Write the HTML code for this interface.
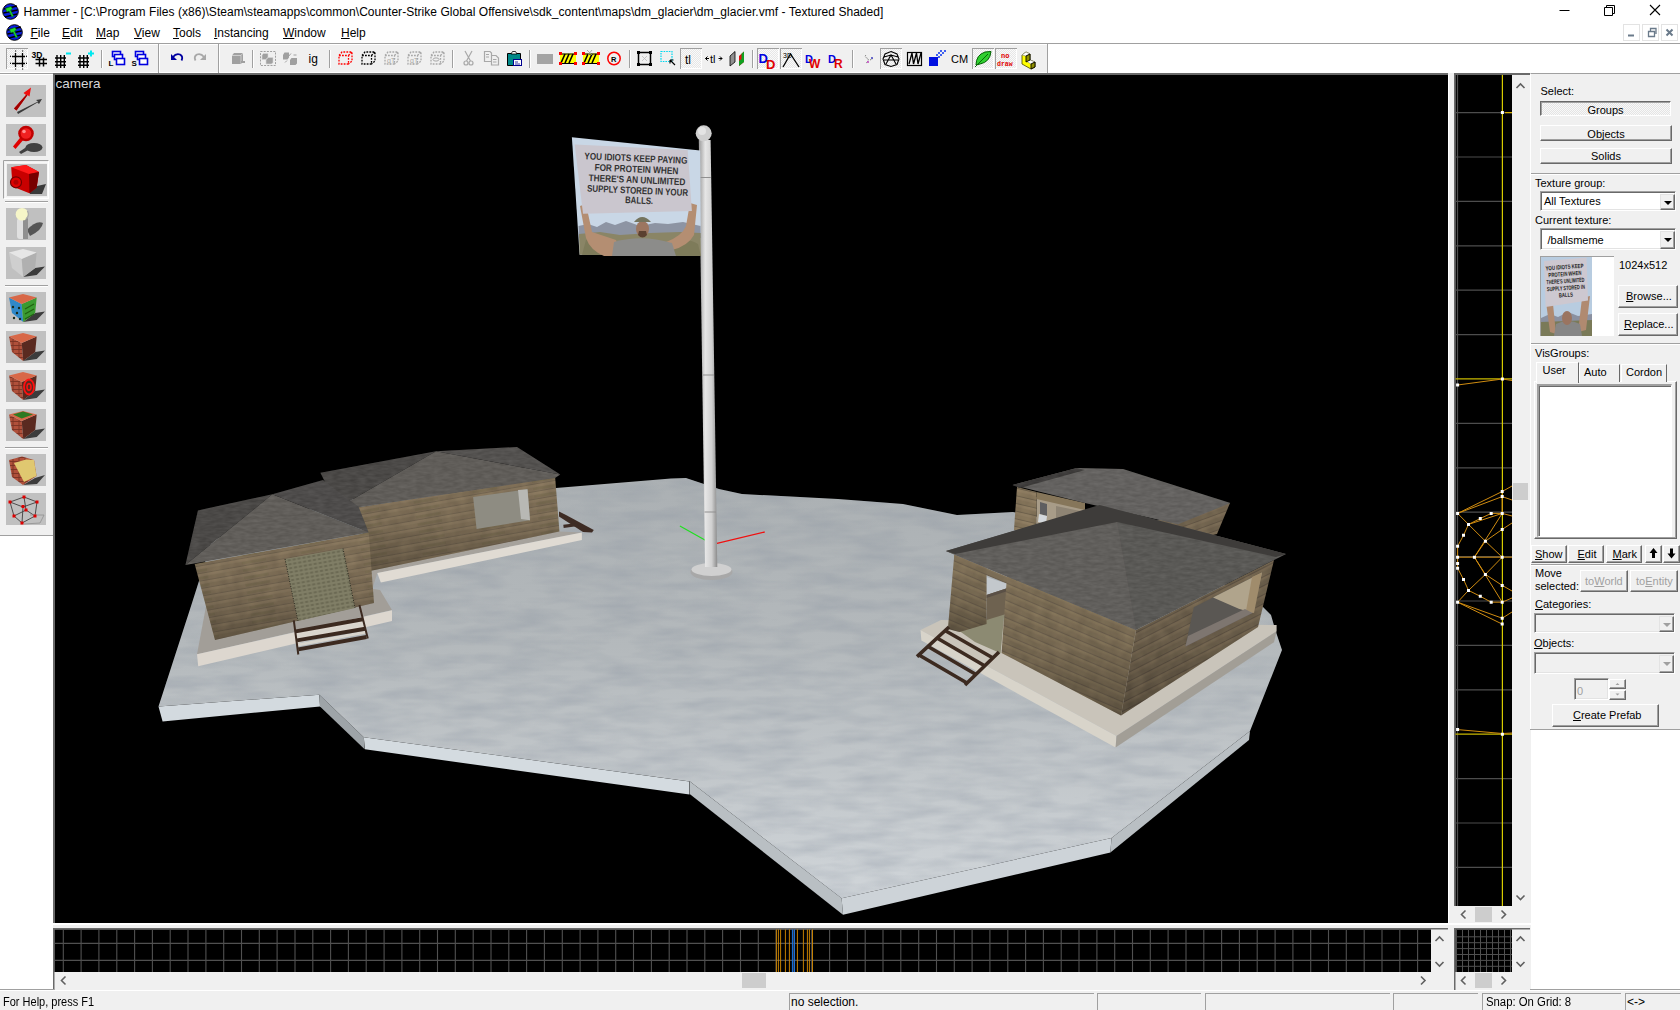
<!DOCTYPE html>
<html><head><meta charset="utf-8">
<style>
*{margin:0;padding:0;box-sizing:border-box}
html,body{width:1680px;height:1010px;overflow:hidden;background:#fff;font-family:"Liberation Sans",sans-serif;color:#000}
.a{position:absolute}
.t{position:absolute;white-space:nowrap;line-height:1}
.mn{top:27px;font-size:12px}
.p{font-size:11px}
.st{font-size:12px}
.btn{background:#f0f0f0;border-top:1px solid #fff;border-left:1px solid #fff;border-right:1px solid #696969;border-bottom:1px solid #696969;box-shadow:inset -1px -1px 0 #a0a0a0}
.btnp{background:repeating-conic-gradient(#f8f8f8 0 25%,#e4e4e4 0 50%) 0 0/2px 2px;border-top:1px solid #696969;border-left:1px solid #696969;border-right:1px solid #fff;border-bottom:1px solid #fff;box-shadow:inset 1px 1px 0 #a0a0a0}
.sep{height:2px;border-top:1px solid #a0a0a0;border-bottom:1px solid #fff}
.combo{background:#fff;border-top:1px solid #a0a0a0;border-left:1px solid #a0a0a0;border-right:1px solid #fff;border-bottom:1px solid #fff;box-shadow:inset 1px 1px 0 #696969,inset -1px -1px 0 #e3e3e3}
.cbtn{position:absolute;width:15px;height:16px;background:#f0f0f0;border-top:1px solid #e3e3e3;border-left:1px solid #e3e3e3;border-right:1px solid #696969;border-bottom:1px solid #696969;box-shadow:inset -1px -1px 0 #a0a0a0}
.cbtn:after{content:"";position:absolute;left:3px;top:6px;border-left:4px solid transparent;border-right:4px solid transparent;border-top:4px solid #000}
.cbtn.dis:after{border-top-color:#a0a0a0}
.tab{background:#f0f0f0;border-top:1px solid #fff;border-left:1px solid #fff;border-right:1px solid #696969}
.sp{top:993px;height:17px;border-top:1px solid #a0a0a0;border-left:1px solid #a0a0a0}
</style></head><body>
<!-- TITLE BAR -->
<svg class="a" style="left:2px;top:3px" width="17" height="17" viewBox="0 0 17 17">
<circle cx="8.5" cy="8.5" r="7.8" fill="#0a1ee0" stroke="#000" stroke-width="1"/>
<path d="M2 6 L15 3 M1.5 10 L15.5 7 M3 14 L15 11" stroke="#000" stroke-width="1.4"/>
<path d="M3.5 5.5 L9 3.5 L10.5 6 L8.5 7 L11.5 13 L10 14 L7 8 L5 9 Z" fill="#22dd22" stroke="#063" stroke-width="0.6"/>
</svg>
<div class="t" style="left:23.5px;top:6.2px;font-size:12px;color:#000;letter-spacing:0.04px">Hammer - [C:\Program Files (x86)\Steam\steamapps\common\Counter-Strike Global Offensive\sdk_content\maps\dm_glacier\dm_glacier.vmf - Textured Shaded]</div>
<svg class="a" style="left:1550px;top:0" width="130" height="22">
<path d="M9.5 10.5 H19.5" stroke="#000" stroke-width="1"/>
<path d="M54.5 7.5 H62.5 V15.5 H54.5 Z M56.5 7.5 V5.5 H64.5 V13.5 H62.5" fill="none" stroke="#000" stroke-width="1"/>
<path d="M100 5 L110 15 M110 5 L100 15" stroke="#000" stroke-width="1.1"/>
</svg>
<!-- MENU BAR -->
<svg class="a" style="left:6px;top:24px" width="17" height="17" viewBox="0 0 17 17">
<circle cx="8.5" cy="8.5" r="7.8" fill="#0a1ee0" stroke="#000" stroke-width="1"/>
<path d="M2 6 L15 3 M1.5 10 L15.5 7 M3 14 L15 11" stroke="#000" stroke-width="1.4"/>
<path d="M3.5 5.5 L9 3.5 L10.5 6 L8.5 7 L11.5 13 L10 14 L7 8 L5 9 Z" fill="#22dd22" stroke="#063" stroke-width="0.6"/>
</svg>
<div class="t mn" style="left:30.5px"><u>F</u>ile</div>
<div class="t mn" style="left:62px"><u>E</u>dit</div>
<div class="t mn" style="left:96px"><u>M</u>ap</div>
<div class="t mn" style="left:134px"><u>V</u>iew</div>
<div class="t mn" style="left:173px"><u>T</u>ools</div>
<div class="t mn" style="left:214px"><u>I</u>nstancing</div>
<div class="t mn" style="left:283px"><u>W</u>indow</div>
<div class="t mn" style="left:341px"><u>H</u>elp</div>
<svg class="a" style="left:1622px;top:23px" width="58" height="19">
<rect x="1.5" y="1.5" width="16" height="16" fill="#fff" stroke="#e3e3e3"/>
<rect x="20.5" y="1.5" width="16" height="16" fill="#fff" stroke="#e3e3e3"/>
<rect x="39.5" y="1.5" width="16" height="16" fill="#fff" stroke="#e3e3e3"/>
<path d="M6 12.5 H12" stroke="#6a7a8a" stroke-width="2"/>
<path d="M26.5 8.5 H32.5 V13.5 H26.5 Z M28.5 8.5 V5.5 H34 V11" fill="none" stroke="#6a7a8a" stroke-width="1.3"/>
<path d="M44.5 6.5 L50.5 12.5 M50.5 6.5 L44.5 12.5" stroke="#6a7a8a" stroke-width="2"/>
</svg>
<!-- TOOLBAR (svg origin y=43) -->
<svg class="a" style="left:0;top:43px" width="1680" height="31" viewBox="0 0 1680 31" shape-rendering="crispEdges">
<defs>
<pattern id="dith" width="2" height="2" patternUnits="userSpaceOnUse"><rect width="2" height="2" fill="#fafafa"/><rect width="1" height="1" fill="#e6e6e6"/><rect x="1" y="1" width="1" height="1" fill="#e6e6e6"/></pattern>
</defs>
<rect x="0" y="0" width="1048" height="31" fill="#f0f0f0"/>
<rect x="0" y="0" width="1680" height="1" fill="#a0a0a0"/>
<rect x="0" y="1" width="1680" height="1" fill="#fff"/>
<rect x="0" y="29" width="1680" height="1" fill="#fff"/>
<rect x="0" y="30" width="1680" height="1" fill="#a0a0a0"/>
<!-- pressed buttons -->
<g fill="url(#dith)" stroke="none">
<rect x="6" y="5" width="22" height="21"/><rect x="680" y="5" width="22" height="21"/><rect x="757" y="5" width="22" height="21"/><rect x="780" y="5" width="22" height="21"/><rect x="880" y="5" width="22" height="21"/><rect x="972" y="5" width="22" height="21"/><rect x="995" y="5" width="22" height="21"/>
</g>
<g fill="none" stroke="#a0a0a0" stroke-width="1">
<path d="M6.5 26 V5.5 H28"/><path d="M680.5 26 V5.5 H702"/><path d="M757.5 26 V5.5 H779"/><path d="M780.5 26 V5.5 H802"/><path d="M880.5 26 V5.5 H902"/><path d="M972.5 26 V5.5 H994"/><path d="M995.5 26 V5.5 H1017"/>
</g>
<g fill="none" stroke="#fff" stroke-width="1">
<path d="M7 25.5 H27.5 V6"/><path d="M681 25.5 H701.5 V6"/><path d="M758 25.5 H778.5 V6"/><path d="M781 25.5 H801.5 V6"/><path d="M881 25.5 H901.5 V6"/><path d="M973 25.5 H993.5 V6"/><path d="M996 25.5 H1016.5 V6"/>
</g>
<!-- separators -->
<g fill="#a0a0a0">
<rect x="101" y="7" width="1" height="18"/><rect x="252" y="7" width="1" height="18"/><rect x="329" y="7" width="1" height="18"/><rect x="452" y="7" width="1" height="18"/><rect x="529" y="7" width="1" height="18"/><rect x="629" y="7" width="1" height="18"/><rect x="752" y="7" width="1" height="18"/><rect x="852" y="7" width="1" height="18"/>
<rect x="158" y="1" width="1" height="29"/><rect x="218" y="1" width="1" height="29"/><rect x="1047" y="1" width="1" height="29"/>
</g>
<g fill="#fff">
<rect x="102" y="7" width="1" height="18"/><rect x="253" y="7" width="1" height="18"/><rect x="330" y="7" width="1" height="18"/><rect x="453" y="7" width="1" height="18"/><rect x="530" y="7" width="1" height="18"/><rect x="630" y="7" width="1" height="18"/><rect x="753" y="7" width="1" height="18"/><rect x="853" y="7" width="1" height="18"/>
<rect x="159" y="1" width="1" height="29"/><rect x="219" y="1" width="1" height="29"/><rect x="1048" y="1" width="1" height="29"/>
</g>
</svg>
<svg class="a" style="left:0;top:43px" width="1680" height="31" viewBox="0 0 1680 31">
<!-- grid icon 1 -->
<g stroke="#000" stroke-width="1.3" fill="none"><path d="M12 13.5 H25 M12 20.5 H25 M15.5 10 V24 M22.5 10 V24"/></g>
<g fill="#000"><rect x="10" y="12.7" width="1" height="1.2"/><rect x="26" y="12.7" width="1" height="1.2"/><rect x="10" y="19.7" width="1" height="1.2"/><rect x="26" y="19.7" width="1" height="1.2"/><rect x="15" y="7.5" width="1.2" height="1"/><rect x="22" y="7.5" width="1.2" height="1"/><rect x="15" y="25.5" width="1.2" height="1"/><rect x="22" y="25.5" width="1.2" height="1"/></g>
<!-- 3D grid -->
<text x="31.5" y="14.5" font-family="Liberation Sans" font-weight="bold" font-size="8.5" fill="#000">3D</text>
<g stroke="#000" stroke-width="1.5" fill="none"><path d="M35.5 16.5 H47 M35.5 20.5 H47 M39.5 14.5 V23.5 M43.5 14.5 V23.5"/></g>
<!-- grid - -->
<g stroke="#000" stroke-width="1.4" fill="none"><path d="M55 15 H66 M55 18.7 H66 M55 22.3 H66 M57 12 V25 M60.7 12 V25 M64.3 12 V25"/><path d="M78 15 H89 M78 18.7 H89 M78 22.3 H89 M80 12 V25 M83.7 12 V25 M87.3 12 V25"/></g>
<path d="M66 10.5 H71" stroke="#00e8f0" stroke-width="2"/>
<path d="M88 10.5 H94 M91 7.5 V13.5" stroke="#00e8f0" stroke-width="2"/>
<!-- L / S stacked -->
<g fill="#fff" stroke="#0000e0" stroke-width="1.6">
<rect x="112.5" y="8.5" width="8" height="5"/><rect x="114.5" y="11.5" width="8" height="5"/><rect x="116.5" y="15.5" width="8" height="6"/>
<rect x="135.5" y="8.5" width="8" height="5"/><rect x="137.5" y="11.5" width="8" height="5"/><rect x="139.5" y="15.5" width="8" height="6"/>
</g>
<text x="108.5" y="23" font-family="Liberation Sans" font-weight="bold" font-size="8" fill="#000">L</text>
<text x="131.5" y="23" font-family="Liberation Sans" font-weight="bold" font-size="8" fill="#000">S</text>
<!-- undo/redo -->
<path d="M173 14 Q176 10 180 11.5 Q183.5 13.5 181.5 17.5" fill="none" stroke="#0000a0" stroke-width="1.8"/>
<path d="M171 11 L171 17 L177 17 Z" fill="#0000a0"/>
<path d="M204 14 Q201 10 197 11.5 Q193.5 13.5 195.5 17.5" fill="none" stroke="#a8a8a8" stroke-width="1.8"/>
<path d="M206 11 L206 17 L200 17 Z" fill="#a8a8a8"/>
<!-- cube -->
<path d="M232 12.5 L234 10 H243 V18.5 L241 21 H232 Z" fill="#a0a0a0"/><path d="M232 12.5 H241 L243 10 M241 12.5 V21" stroke="#d8d8d8" stroke-width="0.8" fill="none"/><rect x="241" y="18" width="4" height="2" fill="#a0a0a0"/>
<!-- group -->
<rect x="260.5" y="8.5" width="15" height="14" fill="none" stroke="#a0a0a0" stroke-dasharray="2,1.2"/>
<path d="M262 12 L263.5 10.5 H268 V15 L266.5 16.5 H262 Z M266 16 L267.5 14.5 H273 V19.5 L271.5 21 H266 Z" fill="#a0a0a0" stroke="#d8d8d8" stroke-width="0.6"/>
<path d="M283 12 L284.5 9.5 H289 V14.5 L287.5 16.5 H283 Z M290 17 L291.5 15 H297 V20.5 L295.5 22 H290 Z" fill="#a0a0a0"/>
<path d="M291 10.5 L288 14 M296.5 12 H293.5 M285 19.5 L287 17.5" stroke="#a0a0a0" stroke-width="1"/>
<text x="308.5" y="20" font-family="Liberation Sans" font-size="12" fill="#000">ig</text>
<!-- dashed cubes -->
<g fill="none" stroke-width="1.3" stroke-dasharray="1.8,1.2">
<path d="M339 12.5 H348.5 V21 H339 Z M339 12.5 L342 9 H352 V18 L348.5 21 M348.5 12.5 L352 9" stroke="#ff0000"/>
<path d="M362 12.5 H371.5 V21 H362 Z M362 12.5 L365 9 H375 V18 L371.5 21 M371.5 12.5 L375 9" stroke="#000"/>
<path d="M385 12.5 H394.5 V21 H385 Z M385 12.5 L388 9 H398 V18 L394.5 21 M394.5 12.5 L398 9" stroke="#a8a8a8"/>
<path d="M408 12.5 H417.5 V21 H408 Z M408 12.5 L411 9 H421 V18 L417.5 21 M417.5 12.5 L421 9" stroke="#a8a8a8"/>
<path d="M431 12.5 H440.5 V21 H431 Z M431 12.5 L434 9 H444 V18 L440.5 21 M440.5 12.5 L444 9" stroke="#a8a8a8"/>
</g>
<text x="387" y="20" font-family="Liberation Sans" font-size="7" fill="#a8a8a8">qT</text>
<text x="410" y="20" font-family="Liberation Sans" font-size="7" fill="#a8a8a8">qT</text>
<ellipse cx="436" cy="16.5" rx="3" ry="1.6" fill="none" stroke="#a8a8a8"/>
<!-- scissors / copy / paste -->
<g fill="none" stroke="#a8a8a8" stroke-width="1.2"><path d="M465 8 L470.5 18 M472 8 L466.5 18"/><circle cx="466" cy="20" r="2"/><circle cx="471" cy="20" r="2"/>
<path d="M484.5 8.5 H490 L491.5 10 V18.5 H484.5 Z M491.5 12.5 H496 L498.5 15 V22 H491.5 Z M486 11.5 H489 M486 14 H489 M493 16.5 H496.5 M493 19 H496.5"/></g>
<path d="M507.5 10.5 H520.5 V22.5 H507.5 Z" fill="#008888" stroke="#000" stroke-width="1"/>
<path d="M511 11 L512.5 8.5 H515.5 L517 11 Z" fill="#fff" stroke="#000" stroke-width="0.8"/>
<rect x="513.5" y="16.5" width="8" height="6" fill="#fff" stroke="#000090" stroke-width="1"/>
<path d="M515 19 H518 M515 21 H520" stroke="#000090" stroke-width="0.8"/>
<!-- texture tools -->
<rect x="537" y="11" width="16" height="10" fill="#a4a4a4"/>
<g><rect x="560" y="10.5" width="16" height="10" fill="#ffff00"/><path d="M561 20 L565 11 M565 20 L569 11 M569 20 L573 11" stroke="#000" stroke-width="1.6"/><path d="M560 11 H576 M560 20.5 H576" stroke="#000" stroke-width="1"/><rect x="559" y="9" width="3" height="3" fill="#f00"/><rect x="574" y="9" width="3" height="3" fill="#f00"/><rect x="559" y="19" width="3" height="3" fill="#f00"/><rect x="574" y="19" width="3" height="3" fill="#f00"/></g>
<g><rect x="583" y="10.5" width="16" height="10" fill="#ffff00"/><path d="M584 20 L588 11 M588 20 L592 11 M592 20 L596 11" stroke="#000" stroke-width="1.6"/><path d="M583 11 H599 M583 20.5 H599" stroke="#000" stroke-width="1"/><rect x="582" y="9" width="3" height="3" fill="#f00"/><rect x="597" y="9" width="3" height="3" fill="#f00"/><rect x="582" y="19" width="3" height="3" fill="#f00"/><rect x="597" y="19" width="3" height="3" fill="#f00"/><path d="M587 7 L593 13 M592 7 L588 12" stroke="#999" stroke-width="0.8"/></g>
<circle cx="614" cy="15.5" r="6.2" fill="none" stroke="#f00" stroke-width="1.5"/>
<text x="611" y="19" font-family="Liberation Sans" font-weight="bold" font-size="7.5" fill="#000">R</text>
<rect x="638.5" y="9.5" width="12" height="12" fill="none" stroke="#000" stroke-width="1.5"/>
<rect x="637" y="8" width="3" height="3" fill="#000"/><rect x="649" y="8" width="3" height="3" fill="#000"/><rect x="637" y="20" width="3" height="3" fill="#000"/><rect x="649" y="20" width="3" height="3" fill="#000"/>
<path d="M642 13 L647 18 M647 13 L642 18" stroke="#bbb" stroke-width="0.8"/>
<rect x="661" y="8.5" width="11" height="10" fill="none" stroke="#00d8f0" stroke-width="1.2" stroke-dasharray="1.6,1"/>
<path d="M670 17 L675 22 M670 17 V20.5 M670 17 H673.5" stroke="#000" stroke-width="1.1"/>
<text x="685" y="20.5" font-family="Liberation Sans" font-size="12" fill="#000">tl</text>
<text x="710" y="20" font-family="Liberation Sans" font-size="11" fill="#000">tl</text>
<path d="M709 15.5 H705.5 M705.5 15.5 L707.5 13.5 M705.5 15.5 L707.5 17.5 M718.5 15.5 H722 M722 15.5 L720 13.5 M722 15.5 L720 17.5" stroke="#000" stroke-width="1"/>
<path d="M730 13 L735 8.5 V19 L730 23 Z" fill="#909090" stroke="#000" stroke-width="0.8"/>
<path d="M739 13 L744 8.5 V19 L739 23 Z" fill="#e01010"/><path d="M739 18 L744 14 V19 L739 23 Z M741.5 10.7 L744 8.5 V14 L741.5 16 Z" fill="#10a020"/>
<!-- DD etc -->
<text x="758.5" y="20" font-family="Liberation Sans" font-weight="bold" font-size="13" fill="#0000e0">D</text><text x="766" y="26" font-family="Liberation Sans" font-weight="bold" font-size="13" fill="#e00000">D</text>
<text x="783" y="15" font-family="Liberation Sans" font-size="7" fill="#000">3D</text>
<path d="M783 24 L790.5 11 L799 24" fill="none" stroke="#000" stroke-width="1.3"/>
<text x="805" y="20" font-family="Liberation Sans" font-weight="bold" font-size="11" fill="#0000e0">D</text><text x="809" y="25" font-family="Liberation Sans" font-weight="bold" font-size="12" fill="#e00000">W</text>
<text x="828" y="20" font-family="Liberation Sans" font-weight="bold" font-size="11" fill="#0000e0">D</text><text x="834" y="25" font-family="Liberation Sans" font-weight="bold" font-size="12" fill="#e00000">R</text>
<path d="M866 12 Q864 14 867 15 Q870 17 866 20 M870 17 L873 15.5" fill="none" stroke="#606060" stroke-width="0.9" stroke-dasharray="1,0.8"/><circle cx="868" cy="19" r="1" fill="#c040c0"/><circle cx="872" cy="15" r="1" fill="#4040c0"/>
<path d="M891 8.5 L897 11 L899 16 L897 21.5 L891 23.5 L885 21.5 L883 16 L885 11 Z M884 14 L891 12 L898 14 M886 21 L891 12 L896 21 M884 17 L898 17" fill="none" stroke="#000" stroke-width="1.1"/>
<rect x="907.5" y="9.5" width="14" height="13" fill="none" stroke="#000" stroke-width="1.2"/>
<path d="M909 21 L912 10 L913.5 21 L916.5 10 L918 21 L921 10" fill="none" stroke="#000" stroke-width="1.3"/>
<rect x="929" y="14" width="9" height="9" fill="#0010e0"/>
<g fill="#4060f0"><rect x="936" y="11" width="2" height="2"/><rect x="938" y="9" width="2" height="2"/><rect x="940" y="11" width="2" height="2"/><rect x="942" y="9" width="2" height="2"/><rect x="938" y="13" width="2" height="2"/><rect x="940" y="7" width="2" height="2"/><rect x="944" y="7" width="2" height="2"/></g>
<text x="951" y="20" font-family="Liberation Sans" font-size="11" fill="#000">CM</text>
<path d="M976 22 Q976 12 985 9 L991 8.5 Q990 19 980 21 Z" fill="#30d030" stroke="#006000" stroke-width="1"/>
<path d="M975 24 L988 11" stroke="#006000" stroke-width="0.9"/>
<text x="1001" y="15" font-family="Liberation Mono" font-weight="bold" font-size="7" fill="#e00000">no</text>
<text x="997" y="22.5" font-family="Liberation Mono" font-weight="bold" font-size="6.5" fill="#e00000">draw</text>
<path d="M1022 12 L1026 9 L1030 11 V17 L1035 19 V24 L1031 26 L1022 21 Z" fill="#ffff00" stroke="#5a5a00" stroke-width="0.9"/>
<path d="M1022 12 L1026 9 L1030 11 L1026 13 Z M1026 18 L1030 17 L1035 19 L1031 21 Z" fill="#fff" stroke="#888" stroke-width="0.6"/>
<path d="M1026 13 L1030 11 V17 L1026 19 Z M1031 21 L1035 19 V24 L1031 26 Z" fill="#909000" stroke="#000" stroke-width="0.9"/>
</svg>
<!-- LEFT TOOLBAR (origin 0,74) -->
<svg class="a" style="left:0;top:74px" width="53" height="464" viewBox="0 0 53 464">
<defs>
<pattern id="brick" width="6" height="4" patternUnits="userSpaceOnUse"><rect width="6" height="4" fill="#b0503a"/><path d="M0 3.5 H6 M1 0 V3.5" stroke="#6a2a1c" stroke-width="0.7"/></pattern>
<pattern id="dith2" width="2" height="2" patternUnits="userSpaceOnUse"><rect width="2" height="2" fill="#f4f4f4"/><rect width="1" height="1" fill="#ffffff"/><rect x="1" y="1" width="1" height="1" fill="#ffffff"/></pattern>
</defs>
<rect x="0" y="0" width="53" height="462" fill="#f0f0f0"/>
<rect x="0" y="0" width="53" height="1" fill="#fff"/>
<rect x="0" y="461" width="53" height="1" fill="#a0a0a0"/>
<g fill="#c0c0c0">
<rect x="6" y="11" width="40" height="32"/><rect x="6" y="50" width="40" height="32"/><rect x="7" y="90" width="40" height="32"/>
<rect x="6" y="134" width="40" height="32"/><rect x="6" y="173" width="40" height="32"/>
<rect x="6" y="218" width="40" height="32"/><rect x="6" y="257" width="40" height="32"/><rect x="6" y="296" width="40" height="32"/><rect x="6" y="335" width="40" height="32"/>
<rect x="6" y="380" width="40" height="32"/><rect x="6" y="419" width="40" height="32"/>
</g>
<!-- selected frame -->
<rect x="3.5" y="86.5" width="45" height="38" fill="none" stroke="#fff" stroke-width="1"/>
<path d="M3.5 124.5 V86.5 H48.5" fill="none" stroke="#a0a0a0"/>
<rect x="5.5" y="88.5" width="42" height="35" fill="none" stroke="#fff" stroke-dasharray="1,1"/>
<!-- separators -->
<rect x="5" y="127" width="43" height="1" fill="#a0a0a0"/><rect x="5" y="128" width="43" height="1" fill="#fff"/>
<rect x="5" y="211" width="43" height="1" fill="#a0a0a0"/><rect x="5" y="212" width="43" height="1" fill="#fff"/>
<rect x="5" y="373" width="43" height="1" fill="#a0a0a0"/><rect x="5" y="374" width="43" height="1" fill="#fff"/>
<!-- icon1 arrow -->
<path d="M17 38 L38 27.5 L36 26 L42 25 L39 30 L37.5 28.5 L18 40 Z" fill="#3a3a3a"/>
<path d="M14 34.5 L26 21 L23.5 19 L31 13.5 L29.5 22.5 L27.5 21 L16.5 36.5 Z" fill="#f01010"/>
<path d="M14 34.5 L26 21 L27.5 21 L16.5 36.5 Z" fill="#a00000"/>
<ellipse cx="34" cy="73.5" rx="8.5" ry="4.5" fill="#404040"/><path d="M19 78 L31 70 L32 74 L21 80 Z" fill="#404040"/>
<path d="M13 72.5 L21.5 62 L24.5 64.5 L15.5 75 Z" fill="#e00000"/>
<circle cx="26" cy="59.5" r="7.8" fill="#c00000"/><circle cx="26" cy="59.5" r="5.3" fill="#f02020"/><circle cx="24" cy="57.5" r="1.8" fill="#ff9090"/>
<path d="M28 114 L46 110 L42 120 L30 120 Z" fill="#3a3a3a"/>
<path d="M11.2 93.2 L26 91 L39 98 L36.6 113.8 L29.4 119.2 L12.5 112.6 Z" fill="#c80000"/>
<path d="M11.2 93.2 L26 91 L39 98 L29 100 Z" fill="#ff1a1a"/>
<path d="M29 100 L39 98 L36.6 113.8 L29.4 119.2 Z" fill="#780000"/>
<circle cx="16" cy="108.3" r="5.5" fill="#e00000" stroke="#700000" stroke-width="1.2"/><circle cx="16" cy="108.3" r="2.5" fill="#b00000"/>
<path d="M27 156 Q36 146 43 149 Q42 156 30 162 Z" fill="#555"/>
<rect x="17" y="144" width="11" height="21" rx="3" fill="#e0e0e0"/><rect x="23" y="144" width="5" height="21" fill="#909090"/>
<circle cx="22" cy="140.3" r="6.3" fill="#f6f6c8"/><path d="M27.5 137 A6.3 6.3 0 0 1 26 145" fill="none" stroke="#aaa" stroke-width="1.5"/>
<!-- icon5 gray cube -->
<polygon points="35.2,194.0 45.0,192.6 36.7,201.0 23.2,203.0" fill="#3c3c3c"/><polygon points="9.0,178.5 21.7,185.0 23.2,203.0 12.0,194.0" fill="#cfcfcf"/><polygon points="21.7,185.0 36.7,178.5 35.2,194.0 23.2,203.0" fill="#b0b0b0"/><polygon points="9.0,178.5 23.0,175.0 36.7,178.5 21.7,185.0" fill="#e6e6e6"/>
<!-- icon6 multi -->
<polygon points="35.2,239.0 45.0,237.6 36.7,246.0 23.2,248.0" fill="#3c3c3c"/><polygon points="9.0,223.5 21.7,230.0 23.2,248.0 12.0,239.0" fill="#3088c8"/><polygon points="21.7,230.0 36.7,223.5 35.2,239.0 23.2,248.0" fill="#3a9a30"/><polygon points="9.0,223.5 23.0,220.0 36.7,223.5 21.7,230.0" fill="#d86848"/><g fill="#1a2a1a"><circle cx="13" cy="233" r="1.2"/><circle cx="17" cy="239" r="1.2"/><circle cx="14" cy="244" r="1.2"/><circle cx="19" cy="234" r="1.2"/><circle cx="20" cy="245" r="1.2"/></g><path d="M25 235 L34 230 M25 240 L34 235 M25 245 L34 240" stroke="#206010" stroke-width="1.2"/>
<!-- icon7 brick -->
<polygon points="35.2,278.0 45.0,276.6 36.7,285.0 23.2,287.0" fill="#3c3c3c"/><polygon points="9.0,262.5 21.7,269.0 23.2,287.0 12.0,278.0" fill="url(#brick)"/><polygon points="21.7,269.0 36.7,262.5 35.2,278.0 23.2,287.0" fill="#5a2a20"/><polygon points="9.0,262.5 23.0,259.0 36.7,262.5 21.7,269.0" fill="#d86848"/>
<!-- icon8 brick target -->
<polygon points="35.2,317.0 45.0,315.6 36.7,324.0 23.2,326.0" fill="#3c3c3c"/><polygon points="9.0,301.5 21.7,308.0 23.2,326.0 12.0,317.0" fill="url(#brick)"/><polygon points="21.7,308.0 36.7,301.5 35.2,317.0 23.2,326.0" fill="#5a2a20"/><polygon points="9.0,301.5 23.0,298.0 36.7,301.5 21.7,308.0" fill="#d86848"/><ellipse cx="29" cy="313" rx="5" ry="7.5" fill="none" stroke="#ff1010" stroke-width="1.8"/><ellipse cx="29" cy="313" rx="2" ry="3.2" fill="none" stroke="#ff1010" stroke-width="1.5"/>
<!-- icon9 brick green -->
<polygon points="35.2,356.0 45.0,354.6 36.7,363.0 23.2,365.0" fill="#3c3c3c"/><polygon points="9.0,340.5 21.7,347.0 23.2,365.0 12.0,356.0" fill="url(#brick)"/><polygon points="21.7,347.0 36.7,340.5 35.2,356.0 23.2,365.0" fill="#5a2a20"/><polygon points="9.0,340.5 23.0,337.0 36.7,340.5 21.7,347.0" fill="#d86848"/><polygon points="13,340.5 23,337.5 33,340.5 21.7,344.5" fill="#2e7a22"/>
<!-- icon10 brick yellow -->
<polygon points="35,404 45,401 37,410 23,411" fill="#3c3c3c"/>
<polygon points="9,386 22,382.5 34,386 36.5,402 23,411 12,403" fill="url(#brick)"/>
<polygon points="14,389 26,385.5 34,386 36.5,402 24,408" fill="#e0c870"/>
<!-- icon11 wireframe -->
<g fill="none" stroke="#404040" stroke-width="0.9"><path d="M10 428 L24 423 L37 428 L23 433 Z M10 428 L14 442 M24 423 L26 436 M37 428 L35 442 M23 433 L22 449 M14 442 L22 449 L35 442 L26 436 L14 442"/></g>
<g fill="none" stroke="#909090" stroke-width="0.8"><path d="M30 441 L44 441 L40 449 L24 450"/></g>
<g fill="#e00000"><rect x="8.5" y="426.5" width="3" height="3"/><rect x="22.5" y="421.5" width="3" height="3"/><rect x="35.5" y="426.5" width="3" height="3"/><rect x="21.5" y="431" width="3" height="3"/><rect x="24.5" y="434.5" width="3" height="3"/><rect x="12.5" y="440.5" width="3" height="3"/><rect x="33.5" y="440.5" width="3" height="3"/><rect x="20.5" y="447.5" width="3" height="3"/></g>
</svg>
<!-- 3D VIEWPORT -->
<div class="a" style="left:53px;top:73px;width:1396px;height:850px;background:#000;border-top:2px solid #6a6a6a;border-left:2px solid #6a6a6a"></div>
<div class="t" style="left:55.5px;top:76.5px;font-size:13.5px;color:#d8d8d8">camera</div>
<svg class="a" style="left:55px;top:75px" width="1393" height="848" viewBox="55 75 1393 848">
<defs>
<linearGradient id="gIsl" x1="0" y1="0" x2="0" y2="1">
<stop offset="0" stop-color="#abb0b3"/><stop offset="0.4" stop-color="#b4b9bc"/><stop offset="1" stop-color="#d0d5d9"/>
</linearGradient>
<linearGradient id="gPole" x1="0" y1="0" x2="1" y2="0">
<stop offset="0" stop-color="#9a9a9a"/><stop offset="0.35" stop-color="#e6e6e6"/><stop offset="0.7" stop-color="#d0d0d0"/><stop offset="1" stop-color="#8a8a8a"/>
</linearGradient>
<pattern id="wA" width="60" height="7.5" patternUnits="userSpaceOnUse" patternTransform="rotate(-10)">
<rect width="60" height="7.5" fill="#7f7059"/><rect y="0" width="60" height="2.5" fill="#897960"/><rect y="6.5" width="60" height="1" fill="#706350"/><rect x="20" y="3" width="25" height="2.5" fill="#76694f" opacity="0.7"/>
</pattern>
<pattern id="wB" width="60" height="7.5" patternUnits="userSpaceOnUse" patternTransform="rotate(13)">
<rect width="60" height="7.5" fill="#84745b"/><rect y="0" width="60" height="2.5" fill="#8e7d62"/><rect y="6.5" width="60" height="1" fill="#6a5e4b"/>
</pattern>
<pattern id="wC" width="60" height="7.5" patternUnits="userSpaceOnUse" patternTransform="rotate(-20)">
<rect width="60" height="7.5" fill="#6f624f"/><rect y="0" width="60" height="2.5" fill="#786a55"/><rect y="6.5" width="60" height="1" fill="#5d5243"/>
</pattern>
<pattern id="wD" width="60" height="8" patternUnits="userSpaceOnUse" patternTransform="rotate(23)">
<rect width="60" height="8" fill="#7a6c55"/><rect y="0" width="60" height="2.5" fill="#85765c"/><rect y="7" width="60" height="1" fill="#6a5e4e"/><rect x="10" y="3" width="30" height="3" fill="#7e6f57" opacity="0.8"/>
</pattern>
<pattern id="wE" width="60" height="8" patternUnits="userSpaceOnUse" patternTransform="rotate(-27)">
<rect width="60" height="8" fill="#6c604d"/><rect y="0" width="60" height="2.5" fill="#766853"/><rect y="7" width="60" height="1" fill="#5a4f42"/>
</pattern>
<linearGradient id="shadeDown" x1="0" y1="0" x2="0" y2="1"><stop offset="0" stop-color="#000" stop-opacity="0"/><stop offset="0.5" stop-color="#000" stop-opacity="0.06"/><stop offset="1" stop-color="#000" stop-opacity="0.25"/></linearGradient>
<filter id="nz" x="0" y="0" width="100%" height="100%" color-interpolation-filters="sRGB">
<feTurbulence type="fractalNoise" baseFrequency="0.02 0.09" numOctaves="3" seed="7" result="t"/>
<feColorMatrix in="t" type="matrix" values="0 0 0 0 0.5  0 0 0 0 0.54  0 0 0 0 0.6  0 0 0 0.5 -0.17" result="c"/>
<feComposite in="c" in2="SourceGraphic" operator="in"/>
</filter>
<filter id="nzw" x="0" y="0" width="100%" height="100%" color-interpolation-filters="sRGB">
<feTurbulence type="fractalNoise" baseFrequency="0.09 0.09" numOctaves="2" seed="3" result="t"/>
<feColorMatrix in="t" type="matrix" values="0.9 0 0 0 0.05  0.8 0 0 0 0.02  0.6 0 0 0 0  0 0 0 0 0.1" result="c"/>
<feComposite in="c" in2="SourceGraphic" operator="in"/>
</filter>
<pattern id="mesh" width="5" height="4" patternUnits="userSpaceOnUse" patternTransform="rotate(-10)"><rect width="5" height="4" fill="#807e66"/><ellipse cx="2.5" cy="2" rx="2" ry="1" fill="#6a6852"/></pattern>
<filter id="nzr" x="0" y="0" width="100%" height="100%" color-interpolation-filters="sRGB">
<feTurbulence type="fractalNoise" baseFrequency="0.12 0.35" numOctaves="2" seed="11" result="t"/>
<feColorMatrix in="t" type="matrix" values="0.8 0 0 0 -0.08  0.8 0 0 0 -0.08  0.8 0 0 0 -0.08  0 0 0 0 0.12" result="c"/>
<feComposite in="c" in2="SourceGraphic" operator="in"/>
</filter>
</defs>
<!-- island thickness faces -->
<polygon points="158.5,706.5 162.6,721.5 320,706.5 319.4,694.7" fill="#d3dadf"/>
<polygon points="319.4,694.7 320,706.5 364.6,749.3 363.8,737.3" fill="#9ea4a8"/>
<polygon points="363.8,737.3 364.9,749.3 689.5,794.6 689.5,781.4" fill="#d4dbe0"/>
<polygon points="690,781.4 690,794.2 843,914.7 841.6,898.3" fill="#b9bfc3"/>
<polygon points="841.6,898.3 843,914.7 1110.4,852.5 1111.5,838" fill="#cdd3d8"/>
<polygon points="1111.5,838 1110.4,852.5 1249,740 1250,731" fill="#b9bfc3"/>
<!-- island top -->
<polygon points="158.5,706.5 192,603 212,540 340,500 556,488 671,478.5 686,478 719,489 742,494 838,499 903,504 957,515 1013,512 1150,540 1263,607 1271,615 1275,629 1282,650 1250,731 1111.5,838 841.6,898.3 690,781.4 363.8,737.3 319.4,694.7" fill="url(#gIsl)"/>
<polygon points="158.5,706.5 192,603 212,540 340,500 556,488 671,478.5 686,478 719,489 742,494 838,499 903,504 957,515 1013,512 1150,540 1263,607 1271,615 1275,629 1282,650 1250,731 1111.5,838 841.6,898.3 690,781.4 363.8,737.3 319.4,694.7" fill="#fff" filter="url(#nz)"/>

<!-- HOUSE 3 (back right) -->
<polygon points="1036.5,497 1085,509 1085,545 1036.5,535" fill="#a89c88"/>
<polygon points="1056,506 1085,512 1085,545 1056,540" fill="#8e8474"/>
<polygon points="1040,502 1047,504 1047,516 1040,514" fill="#5e5e60"/>
<polygon points="1039,514 1047,516 1046,524 1038,522" fill="#d4d8dc"/>
<polygon points="1017,487 1036.5,492 1036.5,535 1014,530" fill="url(#wB)"/><polygon points="1017,487 1036.5,492 1036.5,535 1014,530" fill="#fff" filter="url(#nzw)"/>
<polygon points="1036.5,492 1085,503 1085,510 1036.5,499" fill="#86765a"/>
<polygon points="1150,522 1230,503 1217,534 1150,550" fill="url(#wC)"/><polygon points="1150,522 1230,503 1217,534 1150,550" fill="#fff" filter="url(#nzw)"/>
<polygon points="1012.5,485 1076.8,468 1123,469 1230.4,503 1178,524.3 1085,503" fill="#676562"/>
<polygon points="1012.5,485 1076.8,468 1085,470 1020,488" fill="#3c3a38"/>
<polygon points="1012.5,485 1076.8,468 1123,469 1230.4,503 1178,524.3 1085,503" fill="#fff" filter="url(#nzr)"/>

<!-- HOUSE 4 platform -->
<polygon points="920.5,629.9 941,620 1276.6,625 1276.6,631.2 1116.5,735.9" fill="#c9c4ba"/>
<polygon points="920.5,629.9 1116.5,735.9 1115.6,747.5 921.4,640.6" fill="#d8d4ca"/>
<polygon points="1116.5,735.9 1276.6,631.2 1274,642.2 1115.6,747.5" fill="#a29e96"/>
<!-- house 4 walls -->
<polygon points="958,630 1004.5,612 1000.6,653.3 975,642" fill="#8c8a72"/>
<polygon points="954.3,554.8 1007.7,577 1007.7,584 954.3,562" fill="url(#wD)"/>
<polygon points="986.5,577 1007.7,584 1007.7,588 986.5,595" fill="#c3c8cc"/>
<polygon points="986.5,595 1007.7,588 1007.7,613.4 986.5,620" fill="#6e6250"/>
<polygon points="986.5,595 1007.7,588 1007.7,591 986.5,598" fill="#5a5046"/>
<polygon points="954.3,554.8 986.5,568 986.5,624 959.5,632 947.9,629" fill="url(#wD)"/><polygon points="954.3,554.8 986.5,568 986.5,624 959.5,632 947.9,629" fill="#fff" filter="url(#nzw)"/><polygon points="954.3,554.8 986.5,568 986.5,624 959.5,632 947.9,629" fill="url(#shadeDown)"/>
<polygon points="1007,576 1136,630 1121,715.4 1001.6,653" fill="url(#wD)"/><polygon points="1007,576 1136,630 1121,715.4 1001.6,653" fill="#fff" filter="url(#nzw)"/><polygon points="1007,576 1136,630 1121,715.4 1001.6,653" fill="url(#shadeDown)"/>
<polygon points="1136,630 1274,560 1258,627 1121,715.4" fill="url(#wE)"/><polygon points="1136,630 1274,560 1258,627 1121,715.4" fill="url(#shadeDown)"/><polygon points="1136,630 1274,560 1258,627 1121,715.4" fill="#fff" filter="url(#nzw)"/>
<polygon points="1193.8,607.3 1262,572.5 1252.4,613 1185.4,646.5" fill="#5a5753"/>
<polygon points="1213,597.6 1262,572.5 1252.4,613 1238.2,608.6" fill="#b0a48c"/>
<polygon points="1252,577 1262,572.5 1254,613 1246,611" fill="#a08c6c"/>
<polygon points="1188,636 1245,609 1252.4,613 1185.4,646.5" fill="#7e7670"/>
<!-- house 4 roof -->

<polygon points="946,551 1101,505.5 1286,554 1136,630" fill="#5c5a57"/>
<polygon points="946,551 1117,522 1136,630" fill="#64615e"/>
<polygon points="946,551 1101,505.5 1286,554 1136,630" fill="#fff" filter="url(#nzr)"/>
<polygon points="946,551 1099.5,505 1286,554 1276,557 1117,522 955,554" fill="#3e3c3a"/>
<!-- house 4 stairs -->
<g stroke="#3c2a20" stroke-width="3.6" fill="none" stroke-linecap="butt">
<path d="M949,627 L917,656.6 M999,652 L965,685"/>
<path d="M919,655 L967,683 M928,646.5 L976,674.5 M937,638 L985,666 M945,630.5 L993,658"/>
</g>
<!-- HOUSE 2 (back left) -->
<polygon points="362,565 559.4,531.5 581.9,532.4 377.3,572.9 372,590" fill="#a6a29c"/>
<polygon points="377.3,572.9 581.9,532.4 581.9,540.1 380.8,582.4" fill="#e0dbd3"/>
<polygon points="358.3,507.3 555.1,477.1 559.4,531.5 368.7,571.2" fill="url(#wA)"/><polygon points="358.3,507.3 555.1,477.1 559.4,531.5 368.7,571.2" fill="#fff" filter="url(#nzw)"/><polygon points="358.3,507.3 555.1,477.1 559.4,531.5 368.7,571.2" fill="url(#shadeDown)"/>
<polygon points="473.1,497 527.5,489.2 530,520.3 476.6,528.9" fill="#8e8c82"/>
<polygon points="518,490 527.5,489.2 530,520.3 521,519" fill="#b8b8b4"/>
<polygon points="320.4,472.8 436,451.2 348,502 330,492" fill="#4a4846"/>
<polygon points="348,502 436,451.2 560.3,474.5 555,478 358.3,507.3" fill="#625f5b"/>
<polygon points="436,451.2 517,447 560.3,474.5" fill="#555250"/>
<polygon points="320.4,472.8 436,451.2 517,447 560.3,474.5 555,478 358.3,507.3 348,502 330,492" fill="#fff" filter="url(#nzr)"/>
<polygon points="559,511.5 566,515 593.8,530 592,532.5 583,532 559,516.5" fill="#3e2c24"/>
<path d="M563.5,526.3 L578,524.5" stroke="#3e2c24" stroke-width="3.2"/>

<!-- HOUSE 1 (front left) -->
<polygon points="214,564 380,590 392,610 197,654.3" fill="#a29e98"/>
<polygon points="197,654.3 392,610.3 392,621 198.2,666.2" fill="#ddd7cf"/>
<polygon points="194.7,564 368.7,532.4 374,603 215,640" fill="url(#wA)"/><polygon points="194.7,564 368.7,532.4 374,603 215,640" fill="#fff" filter="url(#nzw)"/><polygon points="194.7,564 368.7,532.4 374,603 215,640" fill="url(#shadeDown)"/>
<polygon points="285,559 343,548.5 355,608 298,621" fill="url(#mesh)"/>
<g stroke="#2a2a20" stroke-width="1" stroke-dasharray="1,1.5" fill="none"><path d="M285,559 L298,621 M343,548.5 L355,608"/></g>
<polygon points="185.4,565.1 197.9,510.4 272.3,494.3" fill="#4a4846"/>
<polygon points="185.4,565.1 272.3,494.3 368.7,532.4" fill="#63605c"/>
<polygon points="272.3,494.3 323,480 358.6,506.8 368.7,532.4" fill="#4e4c4a"/>
<polygon points="185.4,565.1 197.9,510.4 272.3,494.3 323,480 358.6,506.8 368.7,532.4" fill="#fff" filter="url(#nzr)"/>
<!-- house 1 stairs -->
<g stroke="#d9d5cd" stroke-width="3" fill="none"><path d="M297,636 L364,624 M297.6,645 L366,632"/></g>
<g stroke="#3c2a20" stroke-width="2" fill="none"><path d="M293.8,620.4 L298.3,654.5 M359.4,605 L367.8,638.5"/></g>
<g stroke="#3c2a20" stroke-width="4" fill="none"><path d="M295.7,631.4 L362.7,619.2 M297,640.4 L365.2,628.8 M298.3,649.4 L366.5,637"/></g>
<!-- axis gizmo -->
<path d="M679.9,526 L706.7,541" stroke="#20e020" stroke-width="1.2"/>
<path d="M717,543.3 L764.7,532" stroke="#f01010" stroke-width="1.3"/>

<!-- FLAG POLE -->
<ellipse cx="711.5" cy="572" rx="21" ry="8" fill="#a8a8a8"/>
<ellipse cx="711.5" cy="569.5" rx="20" ry="6.5" fill="#d0d0d0"/>
<polygon points="698.8,140 710.6,140 717.3,567 705,567" fill="url(#gPole)"/>
<path d="M699.5,177.5 L710.8,177.5 M703,375 L714,375 M704.5,512 L716,512" stroke="#909090" stroke-width="1"/>
<circle cx="703.7" cy="133.3" r="8" fill="#cfcfcf"/>
<circle cx="702" cy="131" r="4" fill="#e4e4e4"/>

<!-- FLAG -->
<polygon points="571.9,137.2 700.2,150.6 700.9,256 579.6,254.7" fill="#c9d7e6"/>
<polygon points="578.5,226 588,224 597,227 606,222 615,225 626,221 640,226 655,223 668,224 683,222 700.5,226 700.7,238 579,238" fill="#8d94a3"/>
<polygon points="579,234 600,232 620,235 650,233 680,232 700.6,233 700.9,256 579.6,254.7" fill="#8a8566"/>
<path d="M586,240 Q595,236 604,242 L600,255 L582,255 Z M670,244 Q685,236 698,244 L700.9,256 L672,256 Z" fill="#7a7858" opacity="0.8"/>
<path d="M580,206 L586,204 L592,232 Q604,236 616,240 L622,256 L604,256 Q590,250 586,238 Z" fill="#b48e72"/>
<path d="M690,203 L697,205 L694,235 Q688,246 672,250 L666,242 Q682,236 686,226 Z" fill="#b48e72"/>
<path d="M614,242 Q642,234 672,243 L676,256 L612,256 Z" fill="#8c8c8a"/>
<ellipse cx="642.5" cy="229" rx="6.5" ry="8" fill="#9c7660"/>
<path d="M634,222 Q642,212 651,222 Z" fill="#74745e"/>
<path d="M638,235 Q642.5,240 647,235 L646,231 L639,231 Z" fill="#5a4030"/>
<polygon points="574.7,144.4 687.7,150 691.9,211 583,213.7" fill="#cac6ce"/>
<g font-family="Liberation Sans" font-weight="bold" fill="#333" text-anchor="middle" transform="rotate(2.5 635 180)">
<text x="635" y="161.5" font-size="9.6" textLength="103" lengthAdjust="spacingAndGlyphs">YOU IDIOTS KEEP PAYING</text>
<text x="636" y="172.3" font-size="9.6" textLength="84" lengthAdjust="spacingAndGlyphs">FOR PROTEIN WHEN</text>
<text x="637" y="183" font-size="9.6" textLength="97" lengthAdjust="spacingAndGlyphs">THERE'S AN UNLIMITED</text>
<text x="638" y="193.6" font-size="9.6" textLength="101" lengthAdjust="spacingAndGlyphs">SUPPLY STORED IN YOUR</text>
<text x="640" y="203.4" font-size="9.6" textLength="28" lengthAdjust="spacingAndGlyphs">BALLS.</text>
</g>
</svg>
<!-- RIGHT SMALL VIEWPORT + BOTTOM VIEWS -->
<div class="a" style="left:1448px;top:73px;width:83px;height:917px;background:#f0f0f0"></div>
<div class="a" style="left:1448px;top:75px;width:1px;height:848px;background:#fff"></div>
<svg class="a" style="left:1448px;top:73px" width="83" height="917" viewBox="1448 73 83 917">
<rect x="1454" y="73" width="76" height="2" fill="#6a6a6a"/><rect x="1454" y="73" width="1.5" height="833" fill="#6a6a6a"/>
<rect x="1455.5" y="75" width="56.5" height="831" fill="#000"/>
<path d="M1457.5 75 V906 M1455.5 112.6 H1512 M1455.5 157.0 H1512 M1455.5 201.4 H1512 M1455.5 245.8 H1512 M1455.5 290.2 H1512 M1455.5 334.6 H1512 M1455.5 423.4 H1512 M1455.5 467.8 H1512 M1455.5 512.2 H1512 M1455.5 556.6 H1512 M1455.5 601.0 H1512 M1455.5 645.4 H1512 M1455.5 689.8 H1512 M1455.5 778.6 H1512 M1455.5 823.0 H1512 M1455.5 867.4 H1512" stroke="#4d4d4d" stroke-width="1.2" fill="none"/>
<path d="M1455.5 378.8 H1512 M1455.5 734.2 H1512" stroke="#c8b800" stroke-width="1.2"/>
<path d="M1502.4 75 V906" stroke="#d8cc00" stroke-width="1.2"/>
<path d="M1505 112.6 H1512" stroke="#d8b000" stroke-width="1.2"/>
<path d="M1457.6 513.4 L1502.2 496.6 M1457.6 513.4 L1502.2 491.5 M1457.6 513.4 L1468.5 524.4 M1468.5 524.4 L1480.3 518.5 M1480.3 518.5 L1491.2 513.4 M1491.2 513.4 L1502.2 513.4 M1468.5 524.4 L1502.2 513.4 M1468.5 524.4 L1463.5 535.3 M1463.5 535.3 L1457.6 546.3 M1457.6 546.3 L1457.6 557.2 M1457.6 557.2 L1457.6 563.4 M1457.6 563.4 L1457.6 568.2 M1457.6 568.2 L1463.5 579.4 M1463.5 579.4 L1468.5 590.4 M1468.5 590.4 L1480.3 596.3 M1480.3 596.3 L1491.2 602.2 M1491.2 602.2 L1502.2 602.2 M1457.6 602.2 L1468.5 590.4 M1457.6 602.2 L1502.2 618.2 M1457.6 602.2 L1502.2 624.1 M1457.6 557.2 L1474.4 557.2 M1474.4 557.2 L1502.2 557.2 M1474.4 557.2 L1485.4 541.2 M1474.4 557.2 L1485.4 574.4 M1485.4 541.2 L1502.2 529.4 M1485.4 541.2 L1502.2 557.2 M1485.4 574.4 L1502.2 557.2 M1485.4 574.4 L1502.2 585.4 M1468.5 524.4 L1485.4 541.2 M1468.5 590.4 L1485.4 574.4 M1502.2 513.4 L1474.4 557.2 M1502.2 602.2 L1474.4 557.2 M1502.2 513.4 L1502.2 496.6 M1502.2 491.5 L1502.2 496.6 M1502.2 491.5 L1512 486 M1502.2 496.6 L1512 500 M1502.2 513.4 L1512 516 M1502.2 529.4 L1512 523 M1502.2 557.2 L1512 557.2 M1502.2 585.4 L1512 591 M1502.2 602.2 L1512 598 M1502.2 618.2 L1512 612 M1457.6 385 L1502.4 379 L1512 380.5 M1457.6 729.6 L1502.4 733.5 L1512 733" stroke="#d08c10" stroke-width="1" fill="none"/>
<path d="M1500.7 490.0 h3 v3 h-3 Z M1500.7 495.1 h3 v3 h-3 Z M1456.1 511.9 h3 v3 h-3 Z M1489.7 511.9 h3 v3 h-3 Z M1500.7 511.9 h3 v3 h-3 Z M1478.8 517.0 h3 v3 h-3 Z M1467.0 522.9 h3 v3 h-3 Z M1462.0 533.8 h3 v3 h-3 Z M1456.1 544.8 h3 v3 h-3 Z M1456.1 555.7 h3 v3 h-3 Z M1456.1 561.9 h3 v3 h-3 Z M1456.1 566.7 h3 v3 h-3 Z M1472.9 555.7 h3 v3 h-3 Z M1483.9 539.7 h3 v3 h-3 Z M1483.9 572.9 h3 v3 h-3 Z M1500.7 527.9 h3 v3 h-3 Z M1500.7 555.7 h3 v3 h-3 Z M1500.7 583.9 h3 v3 h-3 Z M1462.0 577.9 h3 v3 h-3 Z M1467.0 588.9 h3 v3 h-3 Z M1478.8 594.8 h3 v3 h-3 Z M1456.1 600.7 h3 v3 h-3 Z M1489.7 600.7 h3 v3 h-3 Z M1500.7 600.7 h3 v3 h-3 Z M1500.7 616.7 h3 v3 h-3 Z M1500.7 622.6 h3 v3 h-3 Z M1500.9 111.1 h3 v3 h-3 Z M1456.1 383.5 h3 v3 h-3 Z M1500.9 377.5 h3 v3 h-3 Z M1456.1 728.1 h3 v3 h-3 Z M1500.9 732.7 h3 v3 h-3 Z" fill="#fff"/>
<path d="M1516.5 88 L1520.5 84 L1524.5 88 M1516.5 895.5 L1520.5 899.5 L1524.5 895.5" stroke="#606060" stroke-width="1.6" fill="none"/>
<rect x="1513" y="483" width="15" height="17" fill="#cdcdcd"/>
<path d="M1465.5 910.5 L1461.5 914.5 L1465.5 918.5 M1501.5 910.5 L1505.5 914.5 L1501.5 918.5" stroke="#606060" stroke-width="1.6" fill="none"/>
<rect x="1475" y="907" width="17" height="15" fill="#cdcdcd"/>
<rect x="1448" y="923" width="83" height="2" fill="#fff"/>
<rect x="1454" y="928" width="76" height="1.5" fill="#6a6a6a"/><rect x="1454" y="928" width="1.5" height="62" fill="#6a6a6a"/>
<rect x="1455.5" y="929.5" width="56.5" height="42.5" fill="#000"/>
<path d="M1456.5 929.5 V972 M1462.5 929.5 V972 M1468.5 929.5 V972 M1474.5 929.5 V972 M1480.5 929.5 V972 M1486.5 929.5 V972 M1492.5 929.5 V972 M1498.5 929.5 V972 M1504.5 929.5 V972 M1510.5 929.5 V972 M1455.5 936.8 H1512 M1455.5 942.7 H1512 M1455.5 948.6 H1512 M1455.5 954.5 H1512 M1455.5 960.4 H1512 M1455.5 966.3 H1512" stroke="#505050" stroke-width="1" fill="none"/>
<path d="M1516.5 941 L1520.5 937 L1524.5 941 M1516.5 962 L1520.5 966 L1524.5 962" stroke="#606060" stroke-width="1.6" fill="none"/>
<path d="M1465.5 976.5 L1461.5 980.5 L1465.5 984.5 M1501.5 976.5 L1505.5 980.5 L1501.5 984.5" stroke="#606060" stroke-width="1.6" fill="none"/>
<rect x="1475" y="973" width="17" height="15" fill="#cdcdcd"/>
</svg>
<div class="a" style="left:53px;top:923px;width:1395px;height:67px;background:#f0f0f0"></div>
<div class="a" style="left:53px;top:923px;width:1395px;height:2px;background:#fff"></div>
<div class="a" style="left:0;top:536px;width:53px;height:454px;background:#fff"></div>
<svg class="a" style="left:53px;top:923px" width="1395" height="67" viewBox="53 923 1395 67">
<rect x="53" y="928" width="1395" height="1.5" fill="#6a6a6a"/><rect x="53" y="928" width="1.5" height="62" fill="#6a6a6a"/>
<rect x="54.5" y="929.5" width="1376.5" height="42.5" fill="#000"/>
<path d="M63.3 929.5 V972 M81.1 929.5 V972 M98.9 929.5 V972 M116.8 929.5 V972 M134.6 929.5 V972 M152.4 929.5 V972 M170.2 929.5 V972 M188.0 929.5 V972 M205.9 929.5 V972 M223.7 929.5 V972 M241.5 929.5 V972 M259.3 929.5 V972 M277.1 929.5 V972 M295.0 929.5 V972 M312.8 929.5 V972 M330.6 929.5 V972 M348.4 929.5 V972 M366.2 929.5 V972 M384.1 929.5 V972 M401.9 929.5 V972 M419.7 929.5 V972 M437.5 929.5 V972 M455.3 929.5 V972 M473.2 929.5 V972 M491.0 929.5 V972 M508.8 929.5 V972 M526.6 929.5 V972 M544.4 929.5 V972 M562.3 929.5 V972 M580.1 929.5 V972 M597.9 929.5 V972 M615.7 929.5 V972 M633.5 929.5 V972 M651.4 929.5 V972 M669.2 929.5 V972 M687.0 929.5 V972 M704.8 929.5 V972 M722.6 929.5 V972 M740.5 929.5 V972 M758.3 929.5 V972 M776.1 929.5 V972 M793.9 929.5 V972 M811.7 929.5 V972 M829.6 929.5 V972 M847.4 929.5 V972 M865.2 929.5 V972 M883.0 929.5 V972 M900.8 929.5 V972 M918.7 929.5 V972 M936.5 929.5 V972 M954.3 929.5 V972 M972.1 929.5 V972 M989.9 929.5 V972 M1007.8 929.5 V972 M1025.6 929.5 V972 M1043.4 929.5 V972 M1061.2 929.5 V972 M1079.0 929.5 V972 M1096.9 929.5 V972 M1114.7 929.5 V972 M1132.5 929.5 V972 M1150.3 929.5 V972 M1168.1 929.5 V972 M1186.0 929.5 V972 M1203.8 929.5 V972 M1221.6 929.5 V972 M1239.4 929.5 V972 M1257.2 929.5 V972 M1275.1 929.5 V972 M1292.9 929.5 V972 M1310.7 929.5 V972 M1328.5 929.5 V972 M1346.3 929.5 V972 M1364.2 929.5 V972 M1382.0 929.5 V972 M1399.8 929.5 V972 M1417.6 929.5 V972 M54.5 943.4 H1431 M54.5 960.4 H1431" stroke="#505050" stroke-width="1.1" fill="none"/>
<path d="M776.4 929.5 V972 M778.4 929.5 V972 M780.6 929.5 V972 M785.4 929.5 V972 M789.4 929.5 V972 M797.4 929.5 V972 M803.4 929.5 V972 M807.4 929.5 V972 M809.4 929.5 V972 M812.5 929.5 V972" stroke="#d88c00" stroke-width="0.9" fill="none"/>
<path d="M792.4 929.5 V972 M794.4 929.5 V972" stroke="#1878f0" stroke-width="1" fill="none"/>
<path d="M1435.5 941 L1439.5 937 L1443.5 941 M1435.5 962 L1439.5 966 L1443.5 962" stroke="#606060" stroke-width="1.6" fill="none"/>
<path d="M65.5 976.5 L61.5 980.5 L65.5 984.5 M1421 976.5 L1425 980.5 L1421 984.5" stroke="#606060" stroke-width="1.6" fill="none"/>
<rect x="742" y="973" width="24" height="15" fill="#cdcdcd"/>
</svg><!-- RIGHT PANEL -->
<div class="a" style="left:1530px;top:73px;width:150px;height:657px;background:#f0f0f0;border-top:1px solid #a0a0a0;border-left:1px solid #fff"></div>
<div class="a" style="left:1530px;top:729px;width:150px;height:1px;background:#a0a0a0"></div>
<div class="a" style="left:1530px;top:989px;width:150px;height:1px;background:#a0a0a0"></div>
<div class="t p" style="left:1540.5px;top:85.7px">Select:</div>
<div class="a btnp" style="left:1540px;top:101px;width:131px;height:15px"><span style="left:0;right:0;top:3px;text-align:center" class="t p">Groups</span></div>
<div class="a btn" style="left:1540px;top:125px;width:132px;height:16px"><span style="left:0;right:0;top:2.5px;text-align:center" class="t p">Objects</span></div>
<div class="a btn" style="left:1540px;top:148px;width:132px;height:16px"><span style="left:0;right:0;top:2px;text-align:center" class="t p">Solids</span></div>
<div class="a sep" style="left:1531px;top:173px;width:149px"></div>
<div class="t p" style="left:1535px;top:177.5px">Texture group:</div>
<div class="a combo" style="left:1540px;top:191px;width:136px;height:20px"><div class="cbtn" style="left:119px;top:2px"></div></div>
<div class="t p" style="left:1544px;top:196.3px">All Textures</div>
<div class="t p" style="left:1535px;top:215.2px">Current texture:</div>
<div class="a combo" style="left:1540px;top:228px;width:136px;height:22px"><div class="cbtn" style="left:119px;top:2px;height:18px"></div></div>
<div class="t p" style="left:1547.5px;top:234.5px">/ballsmeme</div>
<!-- texture thumb -->
<svg class="a" style="left:1540px;top:256px" width="75" height="81" viewBox="0 0 75 81">
<rect x="0" y="0" width="74" height="80" fill="#fff"/>
<rect x="0" y="0" width="74" height="1" fill="#a0a0a0"/><rect x="0" y="0" width="1" height="80" fill="#a0a0a0"/>
<rect x="1" y="1" width="51" height="79" fill="#b8cce0"/>
<polygon points="1,62 10,58 18,61 28,56 38,60 52,58 52,70 1,70" fill="#8a90a0"/>
<polygon points="1,66 52,64 52,80 1,80" fill="#7a7a58"/>
<path d="M6,46 L10,76 L16,78 L13,48 Z M42,42 L50,40 L46,74 L38,76 Z" fill="#b08a70"/>
<path d="M16,68 Q28,62 40,68 L42,80 L14,80 Z" fill="#868686"/>
<ellipse cx="27" cy="62" rx="5" ry="7" fill="#9a7460"/>
<polygon points="4,5 46.5,1.4 48,44.5 5.6,51" fill="#cdc8d0"/>
<g font-family="Liberation Sans" font-weight="bold" font-size="6" fill="#1a1a1a" transform="rotate(-4 26 26)">
<text x="6.5" y="13" textLength="38" lengthAdjust="spacingAndGlyphs">YOU IDIOTS KEEP</text>
<text x="9" y="20" textLength="33" lengthAdjust="spacingAndGlyphs">PROTEIN WHEN</text>
<text x="6.5" y="27" textLength="38" lengthAdjust="spacingAndGlyphs">THERE'S UNLIMITED</text>
<text x="6.5" y="34" textLength="38" lengthAdjust="spacingAndGlyphs">SUPPLY STORED IN</text>
<text x="18" y="41" textLength="14" lengthAdjust="spacingAndGlyphs">BALLS</text>
</g>
</svg>
<div class="t p" style="left:1619px;top:259.6px">1024x512</div>
<div class="a btn" style="left:1618px;top:285px;width:60px;height:23px"><span class="t p" style="left:7px;top:5px"><u>B</u>rowse...</span></div>
<div class="a btn" style="left:1618px;top:313px;width:60px;height:23px"><span class="t p" style="left:5px;top:5px"><u>R</u>eplace...</span></div>
<div class="a sep" style="left:1531px;top:343px;width:149px"></div>
<div class="t p" style="left:1535px;top:347.7px">VisGroups:</div>
<!-- tabs -->
<div class="a" style="left:1534px;top:381px;width:143px;height:158px;border-top:1px solid #fff;border-left:1px solid #fff;border-right:1px solid #696969;border-bottom:1px solid #696969;box-shadow:inset -1px -1px 0 #a0a0a0"></div>
<div class="a tab" style="left:1579px;top:364px;width:41px;height:18px"></div>
<div class="a tab" style="left:1621px;top:364px;width:46px;height:18px"></div>
<div class="a tab" style="left:1536px;top:362px;width:43px;height:21px;background:#f0f0f0;border-bottom:none"></div>
<div class="t p" style="left:1542.5px;top:364.7px">User</div>
<div class="t p" style="left:1584px;top:367px">Auto</div>
<div class="t p" style="left:1626px;top:367px">Cordon</div>
<div class="a" style="left:1537px;top:384px;width:135px;height:153px;background:#fff;border-top:2px solid #a0a0a0;border-left:2px solid #a0a0a0;border-right:1px solid #fff;border-bottom:1px solid #fff;box-shadow:inset 1px 1px 0 #696969"></div>
<div class="a btn" style="left:1531px;top:545px;width:36px;height:18px"><span class="t p" style="left:3px;top:3.3px"><u>S</u>how</span></div>
<div class="a btn" style="left:1568px;top:545px;width:36px;height:18px"><span class="t p" style="left:8.5px;top:3.3px"><u>E</u>dit</span></div>
<div class="a btn" style="left:1606px;top:545px;width:36px;height:18px"><span class="t p" style="left:5.5px;top:3.3px"><u>M</u>ark</span></div>
<div class="a btn" style="left:1645px;top:545px;width:17px;height:18px"></div>
<div class="a btn" style="left:1663px;top:545px;width:17px;height:18px"></div>
<svg class="a" style="left:1645px;top:545px" width="35" height="18"><path d="M8.5 3 L4.5 8 H7 V13 H10 V8 H12.5 Z" fill="#000"/><path d="M26.5 13.5 L22.5 8.5 H25 V3.5 H28 V8.5 H30.5 Z" fill="#000"/></svg>
<div class="a sep" style="left:1531px;top:564px;width:149px"></div>
<div class="t p" style="left:1535px;top:568px">Move</div>
<div class="t p" style="left:1535px;top:581.2px">selected:</div>
<div class="a btn" style="left:1580px;top:569.5px;width:48px;height:22px"><span class="t p" style="left:4px;top:5px;color:#a0a0a0">to<u>W</u>orld</span></div>
<div class="a btn" style="left:1630px;top:569.5px;width:48px;height:22px"><span class="t p" style="left:5px;top:5px;color:#a0a0a0">to<u>E</u>ntity</span></div>
<div class="t p" style="left:1535px;top:599.3px"><u>C</u>ategories:</div>
<div class="a combo" style="left:1534px;top:613px;width:141px;height:20px;background:#f0f0f0"><div class="cbtn dis" style="left:124px;top:2px;height:16px"></div></div>
<div class="t p" style="left:1534px;top:638.2px"><u>O</u>bjects:</div>
<div class="a combo" style="left:1534px;top:652px;width:141px;height:22px;background:#f0f0f0"><div class="cbtn dis" style="left:124px;top:2px;height:18px"></div></div>
<div class="a combo" style="left:1574px;top:678px;width:35px;height:22px;background:#f0f0f0"></div>
<div class="t p" style="left:1577px;top:685.5px;color:#a0a0a0">0</div>
<div class="a btn" style="left:1609px;top:679px;width:17px;height:10px"></div>
<div class="a btn" style="left:1609px;top:690px;width:17px;height:10px"></div>
<svg class="a" style="left:1609px;top:679px" width="17" height="21"><path d="M6.5 6 L8.5 4 L10.5 6 Z M6.5 14.5 L8.5 16.5 L10.5 14.5 Z" fill="#a0a0a0"/></svg>
<div class="a btn" style="left:1552px;top:704px;width:107px;height:23px"><span class="t p" style="left:20px;top:5px"><u>C</u>reate Prefab</span></div>
<!-- STATUS BAR -->
<div class="a" style="left:0;top:989px;width:54px;height:1px;background:#a0a0a0"></div>
<div class="a" style="left:0;top:990px;width:1680px;height:20px;background:#f0f0f0;border-top:1px solid #fff"></div>
<div class="t st" style="left:2.5px;top:995.8px;transform:scaleX(0.917);transform-origin:0 0">For Help, press F1</div>
<div class="a sp" style="left:789px;width:305px"></div>
<div class="a sp" style="left:1097px;width:104px"></div>
<div class="a sp" style="left:1205px;width:185px"></div>
<div class="a sp" style="left:1393px;width:85px"></div>
<div class="a sp" style="left:1482px;width:139px"></div>
<div class="a sp" style="left:1625px;width:55px"></div>
<div class="t st" style="left:791px;top:995.5px">no selection.</div>
<div class="t st" style="left:1486px;top:995.8px;transform:scaleX(0.945);transform-origin:0 0">Snap: On Grid: 8</div>
<div class="t st" style="left:1627px;top:995.8px">&lt;-&gt;</div>
</body></html>
